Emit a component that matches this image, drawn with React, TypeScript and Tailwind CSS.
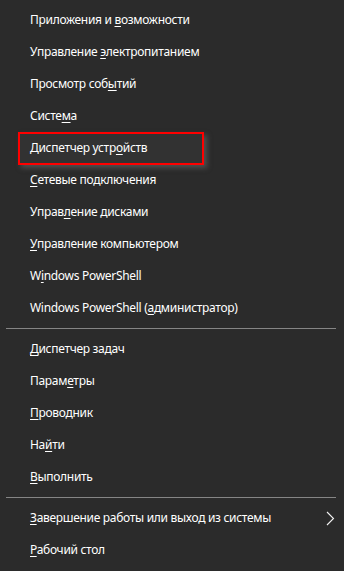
import type { ReactNode } from 'react';

type Item = { pre: string; key: string; post: string; highlight?: boolean; submenu?: boolean };

const groups: Item[][] = [
  [
    { pre: 'Приложения и ', key: 'в', post: 'озможности' },
    { pre: 'Управление ', key: 'э', post: 'лектропитанием' },
    { pre: 'Просмотр соб', key: 'ы', post: 'тий' },
    { pre: 'Систе', key: 'м', post: 'а' },
    { pre: 'Диспетчер устр', key: 'о', post: 'йств', highlight: true },
    { pre: '', key: 'С', post: 'етевые подключения' },
    { pre: 'Управ', key: 'л', post: 'ение дисками' },
    { pre: '', key: 'У', post: 'правление компьютером' },
    { pre: 'W', key: 'i', post: 'ndows PowerShell' },
    { pre: 'Windows PowerShell (', key: 'а', post: 'дминистратор)' },
  ],
  [
    { pre: '', key: 'Д', post: 'испетчер задач' },
    { pre: 'Парам', key: 'е', post: 'тры' },
    { pre: '', key: 'П', post: 'роводник' },
    { pre: 'На', key: 'й', post: 'ти' },
    { pre: '', key: 'В', post: 'ыполнить' },
  ],
  [
    { pre: '', key: 'З', post: 'авершение работы или выход из системы', submenu: true },
    { pre: '', key: 'Р', post: 'абочий стол' },
  ],
];

function Label({ item }: { item: Item }) {
  return (
    <span className="whitespace-nowrap">
      {item.pre}
      <u className="underline decoration-1 underline-offset-[2px]">{item.key}</u>
      {item.post}
    </span>
  );
}

function Row({ item }: { item: Item }) {
  let content: ReactNode = <Label item={item} />;
  if (item.highlight) {
    return (
      <div className="flex h-8 items-center pl-[18px]">
        <div className="flex h-[33px] w-[186px] items-center border-2 border-[#ff0000] bg-[#323232] pl-[10px] shadow-[3px_3px_5px_rgba(110,110,110,0.55)]">
          {content}
        </div>
      </div>
    );
  }
  return (
    <div className="flex h-8 items-center justify-between pl-[30px] pr-[8px]">
      {content}
      {item.submenu && (
        <svg width="9" height="15" viewBox="0 0 9 15" fill="none" className="mr-[1px]">
          <path d="M1 1l6.5 6.5L1 14" stroke="#f2f2f2" strokeWidth="1.1" />
        </svg>
      )}
    </div>
  );
}

export default function App() {
  return (
    <div
      className="min-h-screen bg-[#2b2b2b] py-1 text-[12px] tracking-[-0.3px] text-white"
      style={{ fontFamily: '"Noto Sans", "Open Sans", sans-serif' }}
    >
      {groups.map((group, gi) => (
        <div key={gi}>
          {gi > 0 && (
            <div className="flex h-[9px] items-center pl-[6px] pr-[8px]">
              <div className="h-px w-full bg-[#858585]" />
            </div>
          )}
          {group.map((item) => (
            <Row key={item.pre + item.key + item.post} item={item} />
          ))}
        </div>
      ))}
    </div>
  );
}
